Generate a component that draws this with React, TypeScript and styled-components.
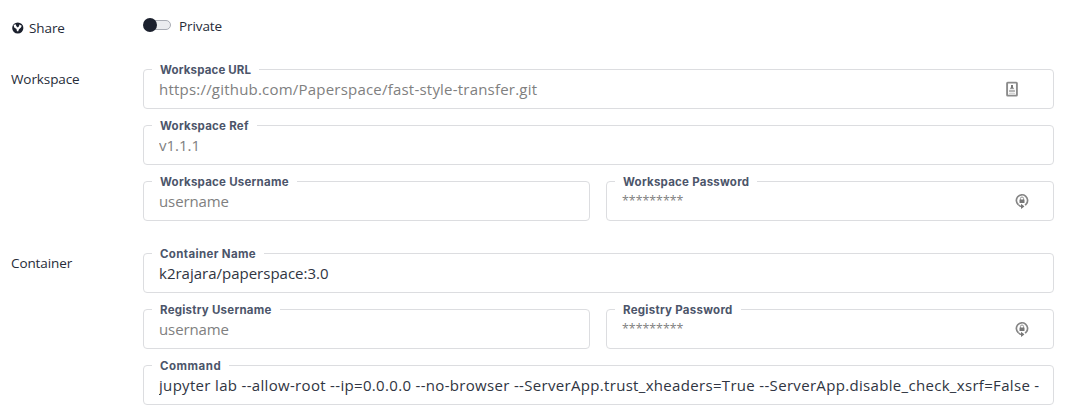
import React from "react";
import styled, { createGlobalStyle } from "styled-components";

const GlobalStyle = createGlobalStyle`
  * { box-sizing: border-box; }
  body {
    margin: 0;
    background: #fff;
    color: #1b202d;
    font-family: "Open Sans", "Noto Sans", sans-serif;
  }
`;

const Page = styled.main`
  display: flex;
  flex-direction: column;
  width: 1072px;
  height: 418px;
  overflow: hidden;
  padding: 15px 18px 0 11px;
`;

const Section = styled.section<{ $gap?: number }>`
  display: grid;
  grid-template-columns: 132px 1fr;
  margin-bottom: ${(p) => p.$gap ?? 32}px;
`;

const SectionTitle = styled.div`
  display: flex;
  align-items: center;
  gap: 5px;
  height: 20px;
  font-size: 13.5px;
  line-height: 20px;
  letter-spacing: -0.1px;
  color: #262b38;
`;

const ShareTitle = styled(SectionTitle)`
  margin-top: 3px;
`;

const ToggleRow = styled.div`
  display: flex;
  align-items: center;
  gap: 8px;
  height: 22px;
  font-size: 13.5px;
  letter-spacing: -0.1px;
  color: #262b38;
`;

const Fields = styled.div`
  display: grid;
  grid-template-columns: 447px 448px;
  gap: 16px;
`;

const Box = styled.div<{ $wide?: boolean }>`
  position: relative;
  grid-column: ${(p) => (p.$wide ? "1 / -1" : "auto")};
  display: flex;
  align-items: center;
  justify-content: space-between;
  height: 40px;
  padding: 0 14px 0 15px;
  border: 1px solid #dcdde0;
  border-radius: 4px;
`;

const Legend = styled.span<{ $track: number }>`
  position: absolute;
  top: -8px;
  left: 8px;
  padding: 0 8px;
  background: #fff;
  color: #4c556a;
  font: 700 11.5px/16px Inter, sans-serif;
  letter-spacing: ${(p) => p.$track}px;
`;

const Value = styled.span<{ $filled?: boolean; $track: number }>`
  flex: 1;
  overflow: hidden;
  white-space: nowrap;
  font-size: 15px;
  line-height: 22px;
  letter-spacing: ${(p) => p.$track}px;
  color: ${(p) => (p.$filled ? "#303542" : "#808080")};
`;

const MaskedValue = styled(Value)`
  font-size: 12.4px;
  line-height: 18px;
`;

const IconSlot = styled.span<{ $right: number }>`
  display: flex;
  margin-right: ${(p) => p.$right}px;
`;

const ShareIcon = () => (
  <svg width="13" height="12" viewBox="0 0 13 12">
    <circle cx="6.8" cy="6" r="5.6" fill="#1b202d" />
    <path d="M2.6 3.1 4.7 2.2 5.4 4.2 6.8 5.6 8 4.2 8.4 2.4 10.7 3.7 10 5.6 8 7.2 7.1 9.6 5.9 9 5.5 7 3.2 5.6Z" fill="#fff" />
  </svg>
);

const Toggle = () => (
  <svg width="28" height="16" viewBox="0 0 28 16">
    <rect x="3.5" y="2.5" width="24" height="9" rx="4.5" fill="#ebecef" stroke="#a9acb4" />
    <circle cx="7" cy="7" r="7" fill="#1b202d" />
  </svg>
);

const CardIcon = () => (
  <svg width="12" height="16" viewBox="0 0 12 16">
    <rect x="1.1" y="1.6" width="9.8" height="13" rx="0.6" fill="#fff" stroke="#8b8b8b" strokeWidth="1.9" />
    <path d="M5 4h2v2.2l1.2 1.5H3.8L5 6.2Z" fill="#777" />
    <rect x="3" y="8.8" width="6" height="2.4" rx="0.8" fill="#b5b5b5" />
    <path d="M3 12.7h6" stroke="#ccc" />
  </svg>
);

const LockIcon = () => (
  <svg width="14" height="16" viewBox="0 0 14 16" fill="none">
    <path d="M3.2 11.5A5.6 5.6 0 1 1 11.4 10.8L10.2 12.3" stroke="#858585" strokeWidth="1.7" />
    <path d="M3.2 11.5 5.2 13.2H8.4" stroke="#858585" strokeWidth="1.4" />
    <path d="M6 10.8 9.4 13.4 6 16Z" fill="#777" />
    <path d="M5.4 7V5.6a1.6 1.6 0 0 1 3.2 0V7" stroke="#959595" strokeWidth="1" />
    <rect x="4.5" y="6.4" width="5" height="3.6" rx="0.5" fill="#777" />
  </svg>
);

type FieldProps = {
  label: string;
  value: string;
  wide?: boolean;
  filled?: boolean;
  masked?: boolean;
  labelTrack?: number;
  track?: number;
  icon?: React.ReactNode;
  iconRight?: number;
};

const Field = ({ label, value, wide, filled, masked, labelTrack = 0.24, track = 0, icon, iconRight = 10 }: FieldProps) => {
  const Text = masked ? MaskedValue : Value;
  return (
    <Box $wide={wide}>
      <Legend $track={labelTrack}>{label}</Legend>
      <Text $filled={filled} $track={track}>{value}</Text>
      {icon && <IconSlot $right={iconRight}>{icon}</IconSlot>}
    </Box>
  );
};

export default function App() {
  return (
    <>
      <GlobalStyle />
      <Page>
        <Section $gap={31}>
          <ShareTitle><ShareIcon />Share</ShareTitle>
          <ToggleRow><Toggle />Private</ToggleRow>
        </Section>
        <Section>
          <SectionTitle>Workspace</SectionTitle>
          <Fields>
            <Field wide label="Workspace URL" labelTrack={0.15} value="https://github.com/Paperspace/fast-style-transfer.git" track={0.21} icon={<CardIcon />} iconRight={21} />
            <Field wide label="Workspace Ref" value="v1.1.1" />
            <Field label="Workspace Username" value="username" track={-0.1} />
            <Field masked label="Workspace Password" value="*********" icon={<LockIcon />} />
          </Fields>
        </Section>
        <Section>
          <SectionTitle>Container</SectionTitle>
          <Fields>
            <Field wide filled label="Container Name" labelTrack={0.36} value="k2rajara/paperspace:3.0" />
            <Field label="Registry Username" value="username" track={-0.1} />
            <Field masked label="Registry Password" labelTrack={0.27} value="*********" icon={<LockIcon />} />
            <Field wide filled label="Command" labelTrack={0.5} value="jupyter lab --allow-root --ip=0.0.0.0 --no-browser --ServerApp.trust_xheaders=True --ServerApp.disable_check_xsrf=False -" track={0.32} />
          </Fields>
        </Section>
      </Page>
    </>
  );
}
